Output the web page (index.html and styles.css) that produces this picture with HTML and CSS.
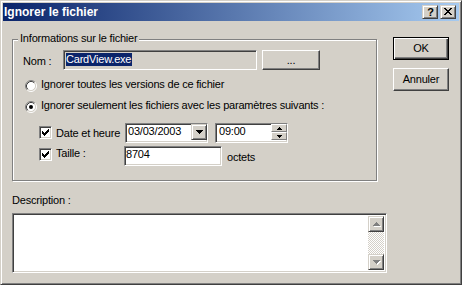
FILE: index.html
```html
<!DOCTYPE html>
<html>
<head>
<meta charset="utf-8">
<title>Ignorer le fichier</title>
<link rel="stylesheet" href="styles.css">
</head>
<body>
<div class="window">
  <div class="titlebar">
    <span class="title">Ignorer le fichier</span>
    <div class="tbtns">
      <span class="tbtn help">?</span>
      <span class="tbtn close"><svg width="14" height="12" viewBox="0 0 14 12" shape-rendering="crispEdges"><path fill="#000" d="M3 2h2v1H3zM9 2h2v1H9zM4 3h2v1H4zM8 3h2v1H8zM5 4h4v1H5zM6 5h2v1H6zM5 6h4v1H5zM4 7h2v1H4zM8 7h2v1H8zM3 8h2v1H3zM9 8h2v1H9z"/></svg></span>
    </div>
  </div>
  <div class="body">
    <div class="main">
      <div class="group">
        <span class="legend">Informations sur le fichier</span>
        <div class="name-row">
          <span class="lbl-nom">Nom :</span>
          <div class="field name-field"><span class="sel">CardView.exe</span></div>
          <div class="btn browse">...</div>
        </div>
        <div class="radio-row r1">
          <svg class="radio" width="12" height="12" viewBox="0 0 12 12"><circle cx="6" cy="6" r="4.5" fill="#fff"/><path d="M2.11 9.89A5.5 5.5 0 0 1 9.89 2.11" fill="none" stroke="#808080"/><path d="M9.89 2.11A5.5 5.5 0 0 1 2.11 9.89" fill="none" stroke="#fff"/><path d="M2.82 9.18A4.5 4.5 0 0 1 9.18 2.82" fill="none" stroke="#404040"/><path d="M9.18 2.82A4.5 4.5 0 0 1 2.82 9.18" fill="none" stroke="#D4D0C8"/></svg>
          <span class="rtext">Ignorer toutes les versions de ce fichier</span>
        </div>
        <div class="radio-row r2">
          <svg class="radio" width="12" height="12" viewBox="0 0 12 12"><circle cx="6" cy="6" r="4.5" fill="#fff"/><path d="M2.11 9.89A5.5 5.5 0 0 1 9.89 2.11" fill="none" stroke="#808080"/><path d="M9.89 2.11A5.5 5.5 0 0 1 2.11 9.89" fill="none" stroke="#fff"/><path d="M2.82 9.18A4.5 4.5 0 0 1 9.18 2.82" fill="none" stroke="#404040"/><path d="M9.18 2.82A4.5 4.5 0 0 1 2.82 9.18" fill="none" stroke="#D4D0C8"/><circle cx="6" cy="6" r="2" fill="#000"/></svg>
          <span class="rtext">Ignorer seulement les fichiers avec les paramètres suivants :</span>
        </div>
        <div class="date-row">
          <span class="check"><svg width="11" height="11" viewBox="0 0 11 11" shape-rendering="crispEdges"><path fill="#000" d="M2 4h1v3H2zM3 5h1v3H3zM4 6h1v3H4zM5 5h1v3H5zM6 4h1v3H6zM7 3h1v3H7zM8 2h1v3H8z"/></svg></span>
          <span class="clabel lbl-date">Date et heure</span>
          <div class="field date-field">
            <span class="ftext">03/03/2003</span>
            <span class="dd-btn"><svg width="7" height="4" viewBox="0 0 7 4" shape-rendering="crispEdges"><path fill="#000" d="M0 0h7v1H0zM1 1h5v1H1zM2 2h3v1H2zM3 3h1v1H3z"/></svg></span>
          </div>
          <div class="field time-field">
            <span class="ftext">09:00</span>
            <span class="spin">
              <span class="spin-btn"><svg width="5" height="3" viewBox="0 0 5 3" shape-rendering="crispEdges"><path fill="#000" d="M2 0h1v1H2zM1 1h3v1H1zM0 2h5v1H0z"/></svg></span>
              <span class="spin-btn"><svg width="5" height="3" viewBox="0 0 5 3" shape-rendering="crispEdges"><path fill="#000" d="M0 0h5v1H0zM1 1h3v1H1zM2 2h1v1H2z"/></svg></span>
            </span>
          </div>
        </div>
        <div class="size-row">
          <span class="check"><svg width="11" height="11" viewBox="0 0 11 11" shape-rendering="crispEdges"><path fill="#000" d="M2 4h1v3H2zM3 5h1v3H3zM4 6h1v3H4zM5 5h1v3H5zM6 4h1v3H6zM7 3h1v3H7zM8 2h1v3H8z"/></svg></span>
          <span class="clabel lbl-size">Taille :</span>
          <div class="field size-field"><span class="ftext">8704</span></div>
          <span class="octets">octets</span>
        </div>
      </div>
      <div class="desc-label">Description :</div>
      <div class="field textarea">
        <div class="vscroll">
          <span class="sb-btn"><svg width="8" height="5" viewBox="0 0 8 5" shape-rendering="crispEdges"><path fill="#fff" d="M4 1h1v1H4zM3 2h3v1H3zM2 3h5v1H2zM1 4h7v1H1z"/><path fill="#808080" d="M3 0h1v1H3zM2 1h3v1H2zM1 2h5v1H1zM0 3h7v1H0z"/></svg></span>
          <span class="sb-track"></span>
          <span class="sb-btn"><svg width="8" height="5" viewBox="0 0 8 5" shape-rendering="crispEdges"><path fill="#fff" d="M1 1h7v1H1zM2 2h5v1H2zM3 3h3v1H3zM4 4h1v1H4z"/><path fill="#808080" d="M0 0h7v1H0zM1 1h5v1H1zM2 2h3v1H2zM3 3h1v1H3z"/></svg></span>
        </div>
      </div>
    </div>
    <div class="buttons">
      <div class="btn default">OK</div>
      <div class="btn cancel">Annuler</div>
    </div>
  </div>
</div>
</body>
</html>
```

FILE: styles.css
```css
html, body {
  margin: 0;
  padding: 0;
}
body {
  background: #D4D0C8;
  font-family: "Liberation Sans", Arial, sans-serif;
  font-size: 11px;
  letter-spacing: -0.2px;
  line-height: 13px;
  color: #000;
}
.window {
  box-sizing: border-box;
  width: 462px;
  height: 285px;
  border: 1px solid;
  border-color: #D4D0C8 #404040 #404040 #D4D0C8;
  box-shadow: inset 1px 1px #fff, inset -1px -1px #808080;
  padding: 2px;
  background: #D4D0C8;
  overflow: hidden;
}
.titlebar {
  height: 18px;
  background: linear-gradient(to right, #0A246A, #A6CAF0);
  display: flex;
  align-items: center;
  justify-content: space-between;
  padding: 0 3px 0 1px;
}
.title {
  color: #fff;
  font-weight: bold;
  font-size: 12px;
  letter-spacing: 0;
  line-height: 14px;
}
.tbtns {
  display: flex;
  gap: 2px;
}
.tbtn {
  box-sizing: border-box;
  width: 16px;
  height: 14px;
  background: #D4D0C8;
  border: 1px solid;
  border-color: #D4D0C8 #404040 #404040 #D4D0C8;
  box-shadow: inset 1px 1px #fff, inset -1px -1px #808080;
  display: flex;
  align-items: center;
  justify-content: center;
}
.tbtn svg { display: block; }
.help {
  font-weight: bold;
  font-size: 11px;
  letter-spacing: 0;
  line-height: 12px;
  padding-left: 1px;
}
.body {
  display: flex;
  align-items: flex-start;
  padding-left: 9px;
}
.main {
  width: 375px;
  display: flex;
  flex-direction: column;
}
.group {
  position: relative;
  box-sizing: border-box;
  margin-top: 18px;
  width: 365px;
  height: 142px;
  border: 1px solid #808080;
  box-shadow: inset 1px 1px #fff, 1px 1px #fff;
  display: flex;
  flex-direction: column;
}
.legend {
  position: absolute;
  left: 5px;
  top: -8px;
  padding: 0 2px;
  background: #D4D0C8;
}
.field {
  box-sizing: border-box;
  border: 1px solid;
  border-color: #808080 #fff #fff #808080;
  box-shadow: inset 1px 1px #404040, inset -1px -1px #D4D0C8;
  background: #fff;
}
.btn {
  box-sizing: border-box;
  background: #D4D0C8;
  border: 1px solid;
  border-color: #fff #404040 #404040 #fff;
  box-shadow: inset -1px -1px #808080;
  display: flex;
  align-items: center;
  justify-content: center;
}
.name-row {
  display: flex;
  margin-top: 10px;
  height: 20px;
  padding-left: 10px;
}
.lbl-nom {
  width: 40px;
  margin-top: 5px;
}
.name-field {
  width: 194px;
  height: 20px;
  background: #D4D0C8;
  padding: 2px 0 0 2px;
}
.sel {
  display: inline-block;
  background: #0A246A;
  color: #fff;
  height: 13px;
  padding-right: 1px;
}
.browse {
  margin-left: 5px;
  width: 58px;
  height: 20px;
  padding-top: 1px;
}
.radio-row {
  display: flex;
  align-items: flex-start;
  padding-left: 12px;
  height: 13px;
}
.r1 { margin-top: 8px; }
.r2 { margin-top: 8px; }
.radio {
  display: block;
  margin-top: 2px;
}
.rtext {
  margin-left: 4px;
}
.date-row, .size-row {
  display: flex;
  align-items: flex-start;
  height: 20px;
  padding-left: 26px;
}
.date-row { margin-top: 11px; }
.size-row { margin-top: 3px; }
.check {
  box-sizing: border-box;
  width: 13px;
  height: 13px;
  border: 1px solid;
  border-color: #808080 #fff #fff #808080;
  box-shadow: inset 1px 1px #404040, inset -1px -1px #D4D0C8;
  background: #fff;
}
.check svg { display: block; }
.date-row .check { margin-top: 3px; }
.size-row .check { margin-top: 2px; }
.clabel {
  margin-left: 4px;
}
.lbl-date {
  width: 69px;
  margin-top: 4px;
}
.lbl-size {
  width: 68px;
  margin-top: 1px;
}
.date-field {
  width: 83px;
  height: 20px;
  display: flex;
}
.ftext {
  flex: 1;
  padding: 1px 0 0 2px;
}
.dd-btn {
  box-sizing: border-box;
  width: 16px;
  height: 16px;
  background: #D4D0C8;
  border: 1px solid;
  border-color: #D4D0C8 #404040 #404040 #D4D0C8;
  box-shadow: inset 1px 1px #fff, inset -1px -1px #808080;
  display: flex;
  align-items: center;
  justify-content: center;
}
.dd-btn svg { display: block; margin-left: 1px; }
.time-field {
  margin-left: 7px;
  width: 73px;
  height: 20px;
  display: flex;
}
.time-field .ftext { padding-left: 3px; }
.spin {
  width: 16px;
  height: 16px;
  display: flex;
  flex-direction: column;
}
.spin-btn {
  box-sizing: border-box;
  height: 8px;
  background: #D4D0C8;
  border: 1px solid;
  border-color: #fff #808080 #808080 #fff;
  display: flex;
  align-items: center;
  justify-content: center;
}
.spin-btn svg { display: block; }
.size-field {
  width: 98px;
  height: 20px;
  display: flex;
}
.size-field .ftext { padding-left: 1px; }
.octets {
  margin-left: 5px;
  margin-top: 5px;
}
.desc-label {
  margin-top: 13px;
  height: 13px;
}
.textarea {
  margin-top: 6px;
  width: 375px;
  height: 60px;
  display: flex;
  justify-content: flex-end;
  padding: 2px;
}
.vscroll {
  width: 16px;
  display: flex;
  flex-direction: column;
}
.sb-btn {
  box-sizing: border-box;
  width: 16px;
  height: 16px;
  background: #D4D0C8;
  border: 1px solid;
  border-color: #D4D0C8 #404040 #404040 #D4D0C8;
  box-shadow: inset 1px 1px #fff, inset -1px -1px #808080;
  display: flex;
  align-items: center;
  justify-content: center;
}
.sb-btn svg { display: block; margin-left: 1px; }
.sb-track {
  flex: 1;
  background-color: #D4D0C8;
  background-image: repeating-conic-gradient(#fff 0 25%, #D4D0C8 0 50%);
  background-size: 2px 2px;
}
.buttons {
  margin-left: 6px;
  display: flex;
  flex-direction: column;
}
.buttons .btn {
  width: 56px;
  height: 23px;
}
.buttons .default {
  margin-top: 16px;
  border: 1px solid #000;
  box-shadow: inset 1px 1px #fff, inset -1px -1px #404040, inset -2px -2px #808080;
}
.buttons .cancel {
  margin-top: 8px;
}
```
